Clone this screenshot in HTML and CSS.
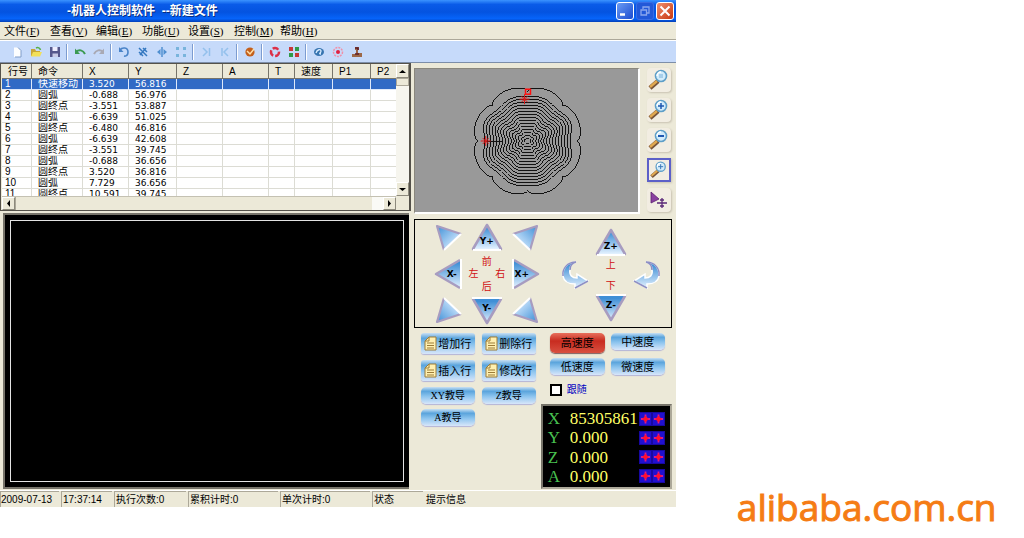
FILE: index.html
```html
<!DOCTYPE html>
<html lang="zh-CN">
<head>
<meta charset="utf-8">
<title>机器人控制软件 --新建文件</title>
<link rel="stylesheet" href="styles.css">
</head>
<body>
<svg class="defs" width="0" height="0" aria-hidden="true">
  <defs>
    <linearGradient id="blueDown" x1="0" y1="0" x2="0" y2="1"><stop offset="0.1" stop-color="#3f8fd6"/><stop offset="1" stop-color="#e4f2ff"/></linearGradient>
    <linearGradient id="blueDiag" x1="0" y1="0" x2="1" y2="1"><stop offset="0" stop-color="#3f8fd6"/><stop offset="0.8" stop-color="#d4eaff"/></linearGradient>
    <symbol id="tri-up" viewBox="0 0 32 28"><path d="M16 2 30 26H2z" fill="url(#blueDown)"/><path d="M16 2 30 26M16 2 2 26" stroke="#a79cc0" stroke-width="2.5" stroke-linecap="round"/><path d="M2 27H30" stroke="#fff" stroke-width="2"/></symbol>
    <symbol id="tri-down" viewBox="0 0 32 28"><path d="M16 26 30 2H2z" fill="url(#blueDown)"/><path d="M16 26 30 2M16 26 2 2" stroke="#a79cc0" stroke-width="2.5" stroke-linecap="round"/><path d="M1 1H31" stroke="#fff" stroke-width="2"/></symbol>
    <symbol id="tri-left" viewBox="0 0 28 32"><path d="M2 16 26 2V30z" fill="url(#blueDown)"/><path d="M26 2 2 16 26 30" fill="none" stroke="#a79cc0" stroke-width="2.5" stroke-linejoin="round"/><path d="M27 1V31" stroke="#fff" stroke-width="2"/></symbol>
    <symbol id="tri-corner" viewBox="0 0 28 28"><path d="M3 3 27 11 10 27z" fill="url(#blueDiag)"/><path d="M10 27 3 3 27 11" fill="none" stroke="#a79cc0" stroke-width="2.2" stroke-linejoin="round"/><path d="M27 11 10 27" stroke="#fff" stroke-width="2"/></symbol>
    <symbol id="curl" viewBox="0 0 28 30"><path d="M15 2C6 2 1 9 2 16c1 6 6 8 12 8v4l13-7-11-7v4c-5 0-8-3-7-8 0-4 2-7 6-8z" fill="url(#blueDown)" stroke="#fff" stroke-width="1.5"/><path d="M15 2C6 2 1 9 2 16M14 28l13-7M9 10c0-4 2-7 6-8" fill="none" stroke="#8d8fc4" stroke-width="1.5"/></symbol>
    <symbol id="lens" viewBox="0 0 24 24"><path d="M3 20 11 13" stroke="#76543a" stroke-width="4.5"/><path d="M3 19 10 13" stroke="#e0a850" stroke-width="2.5"/><circle cx="14" cy="8" r="5.5" fill="#d3ecfb" stroke="#5f9fc8" stroke-width="1.6"/><path d="M10 8a4 4 0 0 1 4-4" stroke="#fff" stroke-width="1.5" fill="none"/></symbol>
    <symbol id="page" viewBox="0 0 13 15"><path d="M5 1h7v13H1V5z" fill="#fff0b0" stroke="#9c7c38"/><path d="M5 1v4H1M3 7h7M3 9.500h7M3 12h7" fill="none" stroke="#9c7c38"/></symbol>
    <symbol id="cross" viewBox="0 0 12 12"><path d="M6 1V11M1 6H11" stroke="#e0188a" stroke-width="2"/><path d="M6 2.500 9.500 6 6 9.500 2.500 6z" fill="#ff1030"/></symbol>
  </defs>
</svg>

<main class="app">
  <header class="titlebar">
    <h1>-机器人控制软件&nbsp; --新建文件</h1>
    <div class="winbtns">
      <button class="wb" aria-label="最小化"><svg viewBox="0 0 16 16"><path d="M3 11.500H8" stroke="#fff" stroke-width="2.500"/></svg></button>
      <button class="wb dim" aria-label="还原"><svg viewBox="0 0 16 16"><path d="M6 6V4H12V10H10M4 7H9.500V12H4z" fill="none" stroke="#8aa6ee" stroke-width="1.300"/></svg></button>
      <button class="wb close" aria-label="关闭"><svg viewBox="0 0 16 16"><path d="M3.500 3.500 12.500 12.500M12.500 3.500 3.500 12.500" stroke="#fff" stroke-width="2"/></svg></button>
    </div>
  </header>

  <nav class="menubar">
    <button>文件<span>(<u>F</u>)</span></button><button>查看<span>(<u>V</u>)</span></button><button>编辑<span>(<u>E</u>)</span></button><button>功能<span>(<u>U</u>)</span></button><button>设置<span>(<u>S</u>)</span></button><button>控制<span>(<u>M</u>)</span></button><button>帮助<span>(<u>H</u>)</span></button>
  </nav>

  <div class="toolbar">
    <button aria-label="新建"><svg viewBox="0 0 12 12"><path d="M3 1.500H7L10 4.500V11H3z" fill="#fdfeff"/><path d="M7 1.500 10 4.500V11H4" fill="none" stroke="#7f9cc8"/></svg></button>
    <button aria-label="打开"><svg viewBox="0 0 12 12"><path d="M1 3H5L6 5H10V10H1z" fill="#c9a637"/><path d="M3 6H12L10 10.500H1z" fill="#f2e05a"/><path d="M6 2C8 1 10 2 10.500 4" stroke="#58b048" stroke-width="1.500" fill="none"/></svg></button>
    <button aria-label="保存"><svg viewBox="0 0 12 12"><path d="M1 1H11V11H1z" fill="#55588c"/><path d="M3.500 1H8.500V5H3.500z" fill="#eef"/><path d="M3.500 7.500H9V11H3.500z" fill="#c8cbe6"/></svg></button>
    <i class="sep"></i>
    <button aria-label="撤销"><svg viewBox="0 0 12 12"><path d="M2 6C5 3 9 4 11 8" stroke="#3c9a52" stroke-width="2" fill="none"/><path d="M1 2.500V8H6z" fill="#3c9a52"/></svg></button>
    <button aria-label="重做"><svg viewBox="0 0 12 12"><path d="M10 6C7 3 3 4 1 8" stroke="#a9a9b4" stroke-width="2" fill="none"/><path d="M11 2.500V8H6z" fill="#a9a9b4"/></svg></button>
    <i class="sep"></i>
    <button aria-label="旋转"><svg viewBox="0 0 12 12"><path d="M2 4C4 1 10 1 10 6S6 10 6 10" stroke="#4a84c8" stroke-width="1.600" fill="none"/><path d="M1 1V6H5.500z" fill="#4a84c8"/></svg></button>
    <button aria-label="缩放"><svg viewBox="0 0 12 12"><path d="M2 2 10 10M2 6 6 10M6 2 10 6M9 2 3 9" stroke="#3478c0" stroke-width="1.500"/></svg></button>
    <button aria-label="镜像"><svg viewBox="0 0 12 12"><path d="M6 1V11" stroke="#4f8fd0" stroke-width="1.500"/><path d="M1 6 4.500 3V9zM11 6 7.500 3V9z" fill="#4f8fd0"/></svg></button>
    <button aria-label="阵列"><svg viewBox="0 0 12 12"><path d="M1 1H4V4H1zM8 1H11V4H8zM1 8H4V11H1zM8 8H11V11H8z" fill="#78b4dc"/></svg></button>
    <i class="sep"></i>
    <button aria-label="前进"><svg viewBox="0 0 12 12"><path d="M3 2 7 6 3 10M9.500 2V10" stroke="#93c0ec" stroke-width="1.500" fill="none"/></svg></button>
    <button aria-label="后退"><svg viewBox="0 0 12 12"><path d="M9 2 5 6 9 10M3 2V10" stroke="#93c0ec" stroke-width="1.500" fill="none"/></svg></button>
    <i class="sep"></i>
    <button aria-label="检查"><svg viewBox="0 0 12 12"><circle cx="6" cy="6" r="4.600" fill="#c4601c"/><path d="M3 5 6 8 10 3" stroke="#ffe0a8" stroke-width="1.500" fill="none"/></svg></button>
    <i class="sep"></i>
    <button aria-label="循环"><svg viewBox="0 0 12 12"><circle cx="6" cy="6" r="4" fill="none" stroke="#dc3048" stroke-width="2.500" stroke-dasharray="6 2"/></svg></button>
    <button aria-label="模块"><svg viewBox="0 0 12 12"><path d="M1 1H5V5H1zM7 7H11V11H7z" fill="#c83838"/><path d="M7 1H11V5H7zM1 7H5V11H1z" fill="#2f9a48"/></svg></button>
    <i class="sep"></i>
    <button aria-label="视图"><svg viewBox="0 0 12 12"><ellipse cx="6" cy="6" rx="5" ry="4" fill="#3674b0"/><path d="M3 7C4 3 8 3 8 5S5 8 8 8" stroke="#d8ecff" stroke-width="1.300" fill="none"/></svg></button>
    <button aria-label="原点"><svg viewBox="0 0 12 12"><circle cx="6" cy="6" r="4.500" fill="none" stroke="#f090a8" stroke-width="1.500" stroke-dasharray="2 1"/><circle cx="6" cy="6" r="2" fill="#e02040"/></svg></button>
    <button aria-label="机器人"><svg viewBox="0 0 12 12"><path d="M4 1H8V4H7V7H11V11H1V8H5V4H4z" fill="#9c6848"/><path d="M4 2H7V4M4 8H8" stroke="#5c1c28" stroke-width="1.500" fill="none"/></svg></button>
  </div>

  <div class="work">
    <section class="left">
      <div class="grid-frame">
        <div class="grid-view">
          <table>
            <colgroup><col class="c30"><col class="c51"><col class="c46"><col class="c48"><col class="c46"><col class="c46"><col class="c26"><col class="c38"><col class="c38"><col></colgroup>
            <thead><tr><th>行号</th><th>命令</th><th>X</th><th>Y</th><th>Z</th><th>A</th><th>T</th><th>速度</th><th>P1</th><th>P2</th></tr></thead>
            <tbody>
              <tr class="sel"><td>1</td><td>快速移动</td><td>3.520</td><td>56.816</td><td></td><td></td><td></td><td></td><td></td><td></td></tr>
              <tr><td>2</td><td>圆弧</td><td>-0.688</td><td>56.976</td><td></td><td></td><td></td><td></td><td></td><td></td></tr>
              <tr><td>3</td><td>圆终点</td><td>-3.551</td><td>53.887</td><td></td><td></td><td></td><td></td><td></td><td></td></tr>
              <tr><td>4</td><td>圆弧</td><td>-6.639</td><td>51.025</td><td></td><td></td><td></td><td></td><td></td><td></td></tr>
              <tr><td>5</td><td>圆终点</td><td>-6.480</td><td>46.816</td><td></td><td></td><td></td><td></td><td></td><td></td></tr>
              <tr><td>6</td><td>圆弧</td><td>-6.639</td><td>42.608</td><td></td><td></td><td></td><td></td><td></td><td></td></tr>
              <tr><td>7</td><td>圆终点</td><td>-3.551</td><td>39.745</td><td></td><td></td><td></td><td></td><td></td><td></td></tr>
              <tr><td>8</td><td>圆弧</td><td>-0.688</td><td>36.656</td><td></td><td></td><td></td><td></td><td></td><td></td></tr>
              <tr><td>9</td><td>圆终点</td><td>3.520</td><td>36.816</td><td></td><td></td><td></td><td></td><td></td><td></td></tr>
              <tr><td>10</td><td>圆弧</td><td>7.729</td><td>36.656</td><td></td><td></td><td></td><td></td><td></td><td></td></tr>
              <tr><td>11</td><td>圆终点</td><td>10.591</td><td>39.745</td><td></td><td></td><td></td><td></td><td></td><td></td></tr>
            </tbody>
          </table>
        </div>
        <div class="vscroll">
          <button class="sb" aria-label="向上"><svg viewBox="0 0 7 7"><path d="M0 5H7L3.500 2z"/></svg></button>
          <i class="vthumb"></i><i class="track"></i>
          <button class="sb" aria-label="向下"><svg viewBox="0 0 7 7"><path d="M0 2H7L3.500 5z"/></svg></button>
        </div>
        <div class="hscroll">
          <button class="sb" aria-label="向左"><svg viewBox="0 0 7 7"><path d="M5 0V7L2 3.500z"/></svg></button>
          <i class="hthumb"></i><i class="htrack"></i>
          <button class="sb" aria-label="向右"><svg viewBox="0 0 7 7"><path d="M2 0V7L5 3.500z"/></svg></button>
        </div>
      </div>
      <div class="screen"><div class="screen-line"></div></div>
    </section>

    <section class="right">
      <div class="preview-row">
        <div class="preview"><svg id="contours" viewBox="0 0 224 143" role="img" aria-label="加工轨迹"></svg></div>
        <div class="zooms">
          <button aria-label="缩放"><svg viewBox="0 0 24 24"><use href="#lens"/><path d="M12 7H16M12 9H16" stroke="#7ab0d8"/></svg></button>
          <button aria-label="放大"><svg viewBox="0 0 24 24"><use href="#lens"/><path d="M11 8H17M14 5V11" stroke="#1f58b0" stroke-width="1.500"/></svg></button>
          <button aria-label="缩小"><svg viewBox="0 0 24 24"><use href="#lens"/><path d="M11 8H17" stroke="#1f58b0" stroke-width="2"/></svg></button>
          <button class="boxed" aria-label="窗口放大"><svg viewBox="0 0 24 24"><use href="#lens"/><path d="M11 8H17M14 5V11" stroke="#3c78b8" stroke-width="1.200"/></svg></button>
          <button aria-label="平移"><svg viewBox="0 0 24 24"><path d="M4 4V15L12 11z" fill="#8a40a0" stroke="#5a2070" stroke-width="0.800"/><path d="M15 10V20M10 15H20M13 12H17M13 18H17" stroke="#5a2878" stroke-width="1.300"/></svg></button>
        </div>
      </div>

      <div class="jog">
        <div class="xy">
          <button aria-label="左前"><svg viewBox="0 0 28 28"><use href="#tri-corner"/></svg></button>
          <button><svg class="w32" viewBox="0 0 32 28"><use href="#tri-up"/></svg><b class="low">Y+</b></button>
          <button aria-label="右前"><svg class="flip-x" viewBox="0 0 28 28"><use href="#tri-corner"/></svg></button>
          <button><svg class="h32" viewBox="0 0 28 32"><use href="#tri-left"/></svg><b class="east">X-</b></button>
          <div class="compass"><span class="n">前</span><span class="w">左</span><span class="e">右</span><span class="s">后</span></div>
          <button><svg class="h32 flip-x" viewBox="0 0 28 32"><use href="#tri-left"/></svg><b class="west">X+</b></button>
          <button aria-label="左后"><svg class="flip-y" viewBox="0 0 28 28"><use href="#tri-corner"/></svg></button>
          <button><svg class="w32" viewBox="0 0 32 28"><use href="#tri-down"/></svg><b class="high">Y-</b></button>
          <button aria-label="右后"><svg class="flip-xy" viewBox="0 0 28 28"><use href="#tri-corner"/></svg></button>
        </div>
        <div class="zpad">
          <button class="up"><svg class="w32" viewBox="0 0 32 28"><use href="#tri-up"/></svg><b class="low">Z+</b></button>
          <button class="ccw" aria-label="逆时针"><svg class="h30" viewBox="0 0 28 30"><use href="#curl"/></svg></button>
          <div class="updown"><span>上</span><span>下</span></div>
          <button class="cw" aria-label="顺时针"><svg class="h30 flip-x" viewBox="0 0 28 30"><use href="#curl"/></svg></button>
          <button class="down"><svg class="w32" viewBox="0 0 32 28"><use href="#tri-down"/></svg><b class="high">Z-</b></button>
        </div>
      </div>

      <div class="controls">
        <div class="edits">
          <button class="pill tall"><svg viewBox="0 0 13 15"><use href="#page"/></svg>增加行</button>
          <button class="pill tall"><svg viewBox="0 0 13 15"><use href="#page"/></svg>删除行</button>
          <button class="pill tall"><svg viewBox="0 0 13 15"><use href="#page"/></svg>插入行</button>
          <button class="pill tall"><svg viewBox="0 0 13 15"><use href="#page"/></svg>修改行</button>
          <button class="pill">XY教导</button>
          <button class="pill">Z教导</button>
          <button class="pill">A教导</button>
        </div>
        <div class="side">
          <div class="speeds">
            <button class="pill red">高速度</button>
            <button class="pill">中速度</button>
            <button class="pill">低速度</button>
            <button class="pill">微速度</button>
          </div>
          <label class="follow"><input type="checkbox">跟随</label>
          <div class="coords">
            <div class="axis"><span>X</span><output>85305861</output><button aria-label="X 减"><svg viewBox="0 0 12 12"><use href="#cross"/></svg></button><button aria-label="X 加"><svg viewBox="0 0 12 12"><use href="#cross"/></svg></button></div>
            <div class="axis"><span>Y</span><output>0.000</output><button aria-label="Y 减"><svg viewBox="0 0 12 12"><use href="#cross"/></svg></button><button aria-label="Y 加"><svg viewBox="0 0 12 12"><use href="#cross"/></svg></button></div>
            <div class="axis"><span>Z</span><output>0.000</output><button aria-label="Z 减"><svg viewBox="0 0 12 12"><use href="#cross"/></svg></button><button aria-label="Z 加"><svg viewBox="0 0 12 12"><use href="#cross"/></svg></button></div>
            <div class="axis"><span>A</span><output>0.000</output><button aria-label="A 减"><svg viewBox="0 0 12 12"><use href="#cross"/></svg></button><button aria-label="A 加"><svg viewBox="0 0 12 12"><use href="#cross"/></svg></button></div>
          </div>
        </div>
      </div>
    </section>
  </div>

  <footer class="status">
    <span class="s60">2009-07-13</span><span class="s53">17:37:14</span><span class="s74">执行次数:0</span><span class="s92">累积计时:0</span><span class="s92">单次计时:0</span><span class="s53">状态</span><span class="grow">提示信息</span>
  </footer>
</main>

<aside class="brand">alibaba.com.cn</aside>
<script src="contours.js"></script>
</body>
</html>
```

FILE: styles.css
```css
* { box-sizing: border-box; }
body {
  margin: 0;
  min-height: 100vh;
  display: flex;
  background: #fff;
  font: 10px/11px "Liberation Sans", "Noto Sans CJK SC", sans-serif;
  color: #000;
}
button { font: inherit; color: inherit; border: 0; padding: 0; background: none; display: block; }
svg { display: block; }
.defs { position: absolute; }

.app {
  flex: 0 0 66%;
  min-width: 660px;
  margin-bottom: 31px;
  display: flex;
  flex-direction: column;
  background: #ece9d8;
}

.titlebar {
  height: 22px;
  padding: 0 2px 0 67px;
  display: flex;
  align-items: center;
  justify-content: space-between;
  background: linear-gradient(#3b93ff 0, #0a5be8 20%, #0453e0 55%, #0664fa 85%, #0340b8 100%);
}
.titlebar h1 { margin: 0; font-size: 12px; line-height: 16px; font-weight: bold; color: #fff; text-shadow: 1px 1px #0a2f80; }
.winbtns { display: flex; gap: 2px; }
.wb { width: 18px; height: 18px; border: 1px solid #fff; border-radius: 3px; background: linear-gradient(135deg, #6a9cf4, #1c4cd0); }
.wb svg { width: 16px; height: 16px; }
.wb.dim { border-color: #3a6ce4; background: #2258d8; }
.wb.close { background: linear-gradient(135deg, #f09070, #c83810); }

.menubar { height: 18px; padding-left: 4px; display: flex; align-items: center; border-bottom: 1px solid #aca899; }
.menubar button { width: 46px; text-align: left; font-size: 11px; line-height: 16px; white-space: nowrap; }
.menubar span { font-family: "Liberation Serif", serif; font-size: 11px; }

.toolbar {
  height: 23px;
  padding-left: 7px;
  display: flex;
  align-items: center;
  background: #c6dafa;
  border-top: 1px solid #fff;
  border-bottom: 1px solid #7d8ea8;
}
.toolbar button { width: 19px; display: flex; justify-content: center; }
.toolbar svg { width: 12px; height: 12px; }
.sep { width: 2px; height: 16px; margin: 0 2px; border-left: 1px solid #7c9cd0; background: #fff; }

.work { flex: 1; display: flex; }
.left { flex: 1; min-width: 0; display: flex; flex-direction: column; gap: 2px; }
.grid-frame {
  display: grid;
  grid-template-columns: 1fr 13px;
  grid-template-rows: 132px 14px;
  padding-left: 1px;
  border: 1px solid #55524a;
  border-right-width: 2px;
}
.grid-view { overflow: hidden; background: #fff; min-width: 0; }
table { width: 100%; border-collapse: separate; border-spacing: 0; table-layout: fixed; }
.c30 { width: 30px; } .c51 { width: 51px; } .c46 { width: 46px; } .c48 { width: 48px; } .c26 { width: 26px; } .c38 { width: 38px; }
th, td { padding: 0 0 0 6px; text-align: left; font-weight: normal; white-space: nowrap; overflow: hidden; }
th { height: 15px; background: #ece9d8; border-right: 1px solid #77746a; border-bottom: 1px solid #77746a; line-height: 13px; }
td { height: 11px; line-height: 10px; border-right: 1px solid #dcdcd4; border-bottom: 1px solid #dcdcd4; }
th:last-child, td:last-child { border-right: 0; }
.sel td { background: #316ac5; color: #fff; border-color: #dfe9fa; }
td:first-child { padding-left: 3px; }
td:nth-child(3), td:nth-child(4) { font-family: "DejaVu Sans", sans-serif; font-size: 9px; }

.vscroll { display: flex; flex-direction: column; background: #f6f5ee; }
.sb { width: 13px; height: 14px; background: #ece9d8; border: 1px solid; border-color: #fff #8c897c #8c897c #fff; display: flex; align-items: center; justify-content: center; }
.sb svg { width: 7px; height: 7px; }
.vthumb { height: 8px; background: #ece9d8; border: 1px solid #aca899; }
.track { flex: 1; }
.hscroll { display: flex; background: #ece9d8; border-top: 1px solid #c4c1b2; }
.hscroll .sb { height: 13px; }
.hthumb { flex: 1; border-left: 1px solid #aca899; }
.htrack { width: 11px; background: #fafaf6; }

.screen { flex: 1; min-height: 200px; margin: 0 2px 1px 3px; padding: 5px; border: 2px solid #77746a; border-right: 0; background: #000; display: flex; }
.screen-line { flex: 1; border: 1px solid #e4e4e4; }

.right { flex: 0 0 265px; padding: 5px 4px 0 3px; display: flex; flex-direction: column; }
.preview-row { display: flex; gap: 7px; }
.preview { flex: 1; height: 146px; background: #999; border: 1px solid; border-color: #8a877c #fff #fff #8a877c; border-right-width: 2px; border-bottom-width: 2px; }
.preview svg { width: 100%; height: 143px; }
.zooms { display: flex; flex-direction: column; gap: 6px; margin-right: 1px; }
.zooms button { width: 24px; height: 24px; border-radius: 4px; background: #f2ede2; box-shadow: 1px 1px 2px #c9c3b2; }
.zooms svg { width: 24px; height: 24px; }
.zooms .boxed { border: 2px solid #5c60c8; border-radius: 0; }
.zooms .boxed svg { width: 20px; height: 20px; }

.jog { height: 109px; margin-top: 5px; border: 1px solid #000; padding: 3px 10px 0 19px; display: flex; justify-content: space-between; }
.jog button { position: relative; display: flex; justify-content: center; align-items: center; }
.jog svg { width: 28px; height: 28px; flex: none; }
.jog svg.w32 { width: 32px; }
.jog svg.h32 { height: 32px; }
.jog svg.h30 { height: 30px; }
.jog b { position: absolute; inset: 0; display: flex; align-items: center; justify-content: center; font: bold 9px/10px "DejaVu Sans", sans-serif; }
.jog b.low { top: 8px; }
.jog b.high { bottom: 7px; }
.jog b.east { left: 8px; }
.jog b.west { right: 8px; }
.flip-x { transform: scaleX(-1); }
.flip-y { transform: scaleY(-1); }
.flip-xy { transform: scale(-1); }
.xy { display: grid; grid-template: 28px 38px 28px / 28px 40px 28px; gap: 4px 5px; align-content: start; }
.compass { display: grid; grid-template: "a n b" 12px "w c e" 12px "d s f" 14px / 1fr 1fr 1fr; justify-items: center; align-items: center; color: #d01010; font-size: 10px; }
.n { grid-area: n; } .w { grid-area: w; } .e { grid-area: e; } .s { grid-area: s; }
.zpad { padding-top: 5px; display: grid; grid-template: ". up ." 28px "ccw mid cw" 34px ". down ." 28px / 28px 32px 28px; gap: 2px 6px; align-content: start; }
.up { grid-area: up; } .ccw { grid-area: ccw; } .cw { grid-area: cw; } .down { grid-area: down; }
.updown { grid-area: mid; display: flex; flex-direction: column; justify-content: space-between; align-items: center; color: #d01010; padding: 1px 0; }

.controls { flex: 1; display: flex; justify-content: space-between; padding: 5px 0 1px 7px; }
.edits { display: grid; grid-template-columns: 54px 54px; grid-template-rows: 22px 22px 17px 17px; gap: 5px 7px; align-content: start; }
.pill {
  height: 17px;
  border-radius: 5px;
  background: linear-gradient(#c8e0f4 0, #5aa4dc 25%, #8cc4ee 55%, #d8e6fa 100%);
  box-shadow: 0 1px 1px #b4b4d8;
  font: 10px/14px "Liberation Serif", "Noto Sans CJK SC", serif;
  display: flex;
  align-items: center;
  justify-content: center;
  white-space: nowrap;
  gap: 1px;
}
.pill.tall { height: 21px; border-radius: 3px; font-size: 11px; }
.pill svg { width: 13px; height: 15px; }
.pill.red { background: linear-gradient(#e8705c, #c82c20 40%, #d85040); height: 20px; box-shadow: 0 1px 1px #806060; }
.side { width: 131px; display: flex; flex-direction: column; }
.speeds { display: grid; grid-template-columns: 55px 54px; gap: 5px 6px; padding-left: 9px; }
.speeds .pill { font-size: 11px; }
.follow { display: flex; align-items: center; gap: 5px; margin: 9px 0 8px 9px; color: #0000c0; font-size: 10px; line-height: 12px; }
.follow input { appearance: none; width: 12px; height: 12px; margin: 0; background: #fff; border: 2px solid #000; }
.coords { flex: 1; background: #000; border: 2px solid #77746a; border-right-color: #aca899; border-bottom-color: #aca899; padding: 3px 5px 1px; display: flex; flex-direction: column; justify-content: space-between; font: 17px/19px "Liberation Serif", serif; }
.axis { display: flex; align-items: center; }
.axis span { width: 22px; color: #48c050; }
.axis output { flex: 1; color: #ffff66; }
.axis button { width: 13px; height: 14px; background: #2010d0; border: 1px solid #1808a0; }
.axis button svg { width: 11px; height: 12px; }

.status { height: 17px; display: flex; border-top: 1px solid #fff; line-height: 14px; }
.status span { padding: 1px 0 0 1px; margin-right: 2px; border: solid #aca899; border-width: 1px 0 0 1px; white-space: nowrap; overflow: hidden; flex: none; }
.status .s60 { width: 59px; padding-left: 0; } .status .s53 { width: 51px; } .status .s74 { width: 72px; } .status .s92 { width: 90px; }
.status .grow { flex: 1; border: 0; padding: 2px 0 0 1px; }

.brand { flex: 1; align-self: flex-end; padding: 0 0 9px 61px; font: 37px/44px "Open Sans", sans-serif; -webkit-text-stroke: 1px #f57c14; color: #f57c14; white-space: nowrap; }
```

FILE: contours.js
```js
const NS = "http://www.w3.org/2000/svg";
const plot = document.getElementById("contours");
const cx = 113, cy = 72;

function add(name, attrs) {
  const el = document.createElementNS(NS, name);
  for (const key in attrs) el.setAttribute(key, attrs[key]);
  plot.appendChild(el);
}

function ring(radius) {
  let d = "";
  for (let i = 0; i < 160; i++) {
    const a = (i / 160) * Math.PI * 2;
    const r = radius(a);
    d += (i ? "L" : "M") + (cx + r * Math.cos(a)).toFixed(1) + " " + (cy + r * Math.sin(a)).toFixed(1);
  }
  add("path", { d: d + "z", fill: "none", stroke: "#111", "stroke-width": 1, "shape-rendering": "crispEdges" });
}

ring(a => 50 + 5 * Math.sqrt(Math.abs(Math.sin(4 * a))));
for (let r = 3; r <= 45; r += 3) {
  ring(a => r - Math.min(1, r / 20) * (1.3 * Math.cos(8 * a) + 0.9 * Math.cos(6 * a)));
}
add("path", { d: "M70 72.500H88", stroke: "#111" });
for (const [x, y] of [[71, 72], [110, 30]]) {
  add("path", { d: `M${x - 5} ${y}h10M${x} ${y - 5}v10M${x - 3} ${y - 3}l6 6M${x + 3} ${y - 3}l-6 6`, stroke: "#e01818" });
}
add("rect", { x: 111, y: 20, width: 5, height: 5, fill: "none", stroke: "#ff1010", "stroke-width": 1.5 });
```
